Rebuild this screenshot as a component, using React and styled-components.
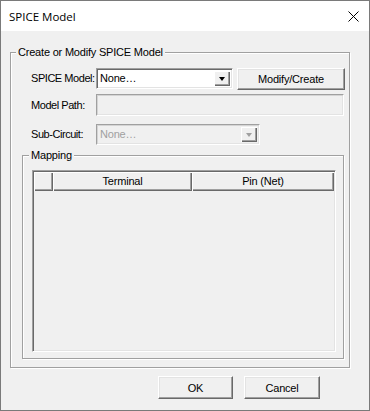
import React from 'react'
import styled, { createGlobalStyle } from 'styled-components'

const GlobalStyle = createGlobalStyle`
  html, body {
    margin: 0;
    padding: 0;
    background: #f0f0f0;
  }
  * {
    box-sizing: border-box;
  }
`

const Window = styled.div`
  width: 370px;
  height: 411px;
  border: 1px solid #7a7a7a;
  display: flex;
  flex-direction: column;
  font-family: "Liberation Sans", Arial, sans-serif;
  font-size: 11px;
  letter-spacing: -0.2px;
  color: #000;
  overflow: hidden;
`

const TitleBar = styled.div`
  height: 30px;
  flex: none;
  background: #fff;
  display: flex;
  align-items: center;
  justify-content: space-between;
  padding-left: 8px;
`

const Title = styled.span`
  font-family: "Open Sans", "Noto Sans", sans-serif;
  font-size: 11.5px;
  letter-spacing: 0;
`

const Close = styled.div`
  width: 32px;
  height: 30px;
  display: flex;
  align-items: center;
  justify-content: center;
`

const Body = styled.div`
  flex: 1;
  background: #f0f0f0;
  display: flex;
  flex-direction: column;
  padding: 15px 0 0 9px;
`

const Group = styled.fieldset`
  margin: ${p => p.$margin || '0'};
  padding: ${p => p.$padding || '0'};
  width: ${p => p.$width}px;
  height: ${p => p.$height}px;
  flex: none;
  border: 1px solid #a0a0a0;
  box-shadow: 1px 1px 0 #fff, inset 1px 1px 0 #fff;
  min-width: 0;
`

const Legend = styled.legend`
  margin-left: ${p => p.$offset}px;
  padding: 0 2px;
  line-height: 13px;
  background: #f0f0f0;
`

const Row = styled.div`
  display: flex;
  align-items: flex-start;
  margin-top: ${p => p.$top}px;
  padding-left: 20px;
`

const Label = styled.label`
  width: 65px;
  flex: none;
  line-height: ${p => p.$h}px;
  letter-spacing: -0.45px;
  white-space: nowrap;
`

const Sunken = styled.div`
  width: ${p => p.$width}px;
  height: ${p => p.$height}px;
  flex: none;
  border-style: solid;
  border-width: 1px;
  border-color: #a0a0a0 #fff #fff #a0a0a0;
  box-shadow: inset 1px 1px 0 ${p => (p.$disabled ? '#d4d4d4' : '#696969')},
    inset -1px -1px 0 #e3e3e3;
  background: ${p => (p.$disabled ? '#f0f0f0' : '#fff')};
  color: ${p => (p.$disabled ? '#a0a0a0' : '#000')};
  display: flex;
  align-items: stretch;
  padding: 2px;
`

const ComboText = styled.span`
  flex: 1;
  padding-left: 1px;
  line-height: 15px;
`

const DropButton = styled.div`
  width: 16px;
  flex: none;
  background: #f0f0f0;
  box-shadow: inset 1px 1px 0 #fff, inset -1px -1px 0 #696969, inset -2px -2px 0 #a0a0a0;
  display: flex;
  align-items: center;
  justify-content: center;
`

const Arrow = styled.span`
  width: 0;
  height: 0;
  border-left: 3.5px solid transparent;
  border-right: 3.5px solid transparent;
  border-top: 4px solid ${p => (p.$disabled ? '#a0a0a0' : '#000')};
  margin-top: 1px;
`

const Button = styled.button`
  width: ${p => p.$width}px;
  height: ${p => p.$height}px;
  margin-left: ${p => p.$left || 0}px;
  flex: none;
  font: inherit;
  letter-spacing: inherit;
  color: #000;
  background: #f0f0f0;
  border-style: solid;
  border-width: 1px;
  border-color: #fff #696969 #696969 #fff;
  box-shadow: inset -1px -1px 0 #a0a0a0, inset 1px 1px 0 #e3e3e3;
  padding: 0;
`

const Table = styled.div`
  margin: 0 7px 0 9px;
  height: 182px;
  border-style: solid;
  border-width: 1px;
  border-color: #a0a0a0 #fff #fff #a0a0a0;
  box-shadow: inset 1px 1px 0 #696969, inset -1px -1px 0 #e3e3e3;
  padding: 1px;
  background: #f0f0f0;
`

const HeaderRow = styled.div`
  display: flex;
  height: 19px;
`

const HeaderCell = styled.div`
  width: ${p => p.$width}px;
  flex: none;
  background: #f0f0f0;
  box-shadow: inset 1px 1px 0 #fff, inset -1px -1px 0 #696969, inset -2px -2px 0 #a0a0a0;
  text-align: center;
  line-height: 18px;
`

const Footer = styled.div`
  display: flex;
  justify-content: flex-end;
  padding: 8px 49px 0 0;
`

function App() {
  return (
    <>
      <GlobalStyle />
      <Window>
        <TitleBar>
          <Title>SPICE Model</Title>
          <Close>
            <svg width="11" height="11" viewBox="0 0 11 11">
              <path d="M0.5 0.5 L10.5 10.5 M10.5 0.5 L0.5 10.5" stroke="#000" strokeWidth="1" />
            </svg>
          </Close>
        </TitleBar>
        <Body>
          <Group $width={340} $height={322}>
            <Legend $offset={5}>Create or Modify SPICE Model</Legend>
            <Row $top={9}>
              <Label $h={21}>SPICE Model:</Label>
              <Sunken $width={137} $height={21}>
                <ComboText>None…</ComboText>
                <DropButton><Arrow /></DropButton>
              </Sunken>
              <Button $width={108} $height={22} $left={4}>Modify/Create</Button>
            </Row>
            <Row $top={4}>
              <Label $h={22}>Model Path:</Label>
              <Sunken $width={248} $height={22} $disabled />
            </Row>
            <Row $top={8}>
              <Label $h={21}>Sub-Circuit:</Label>
              <Sunken $width={164} $height={21} $disabled>
                <ComboText>None…</ComboText>
                <DropButton><Arrow $disabled /></DropButton>
              </Sunken>
            </Row>
            <Group $width={322} $height={210} $margin="4px 0 0 11px" $padding="8px 0 6px 0">
              <Legend $offset={6}>Mapping</Legend>
              <Table>
                <HeaderRow>
                  <HeaderCell $width={19} />
                  <HeaderCell $width={139}>Terminal</HeaderCell>
                  <HeaderCell $width={142}>Pin (Net)</HeaderCell>
                </HeaderRow>
              </Table>
            </Group>
          </Group>
          <Footer>
            <Button $width={75} $height={23}>OK</Button>
            <Button $width={76} $height={23} $left={11}>Cancel</Button>
          </Footer>
        </Body>
      </Window>
    </>
  )
}

export default App
